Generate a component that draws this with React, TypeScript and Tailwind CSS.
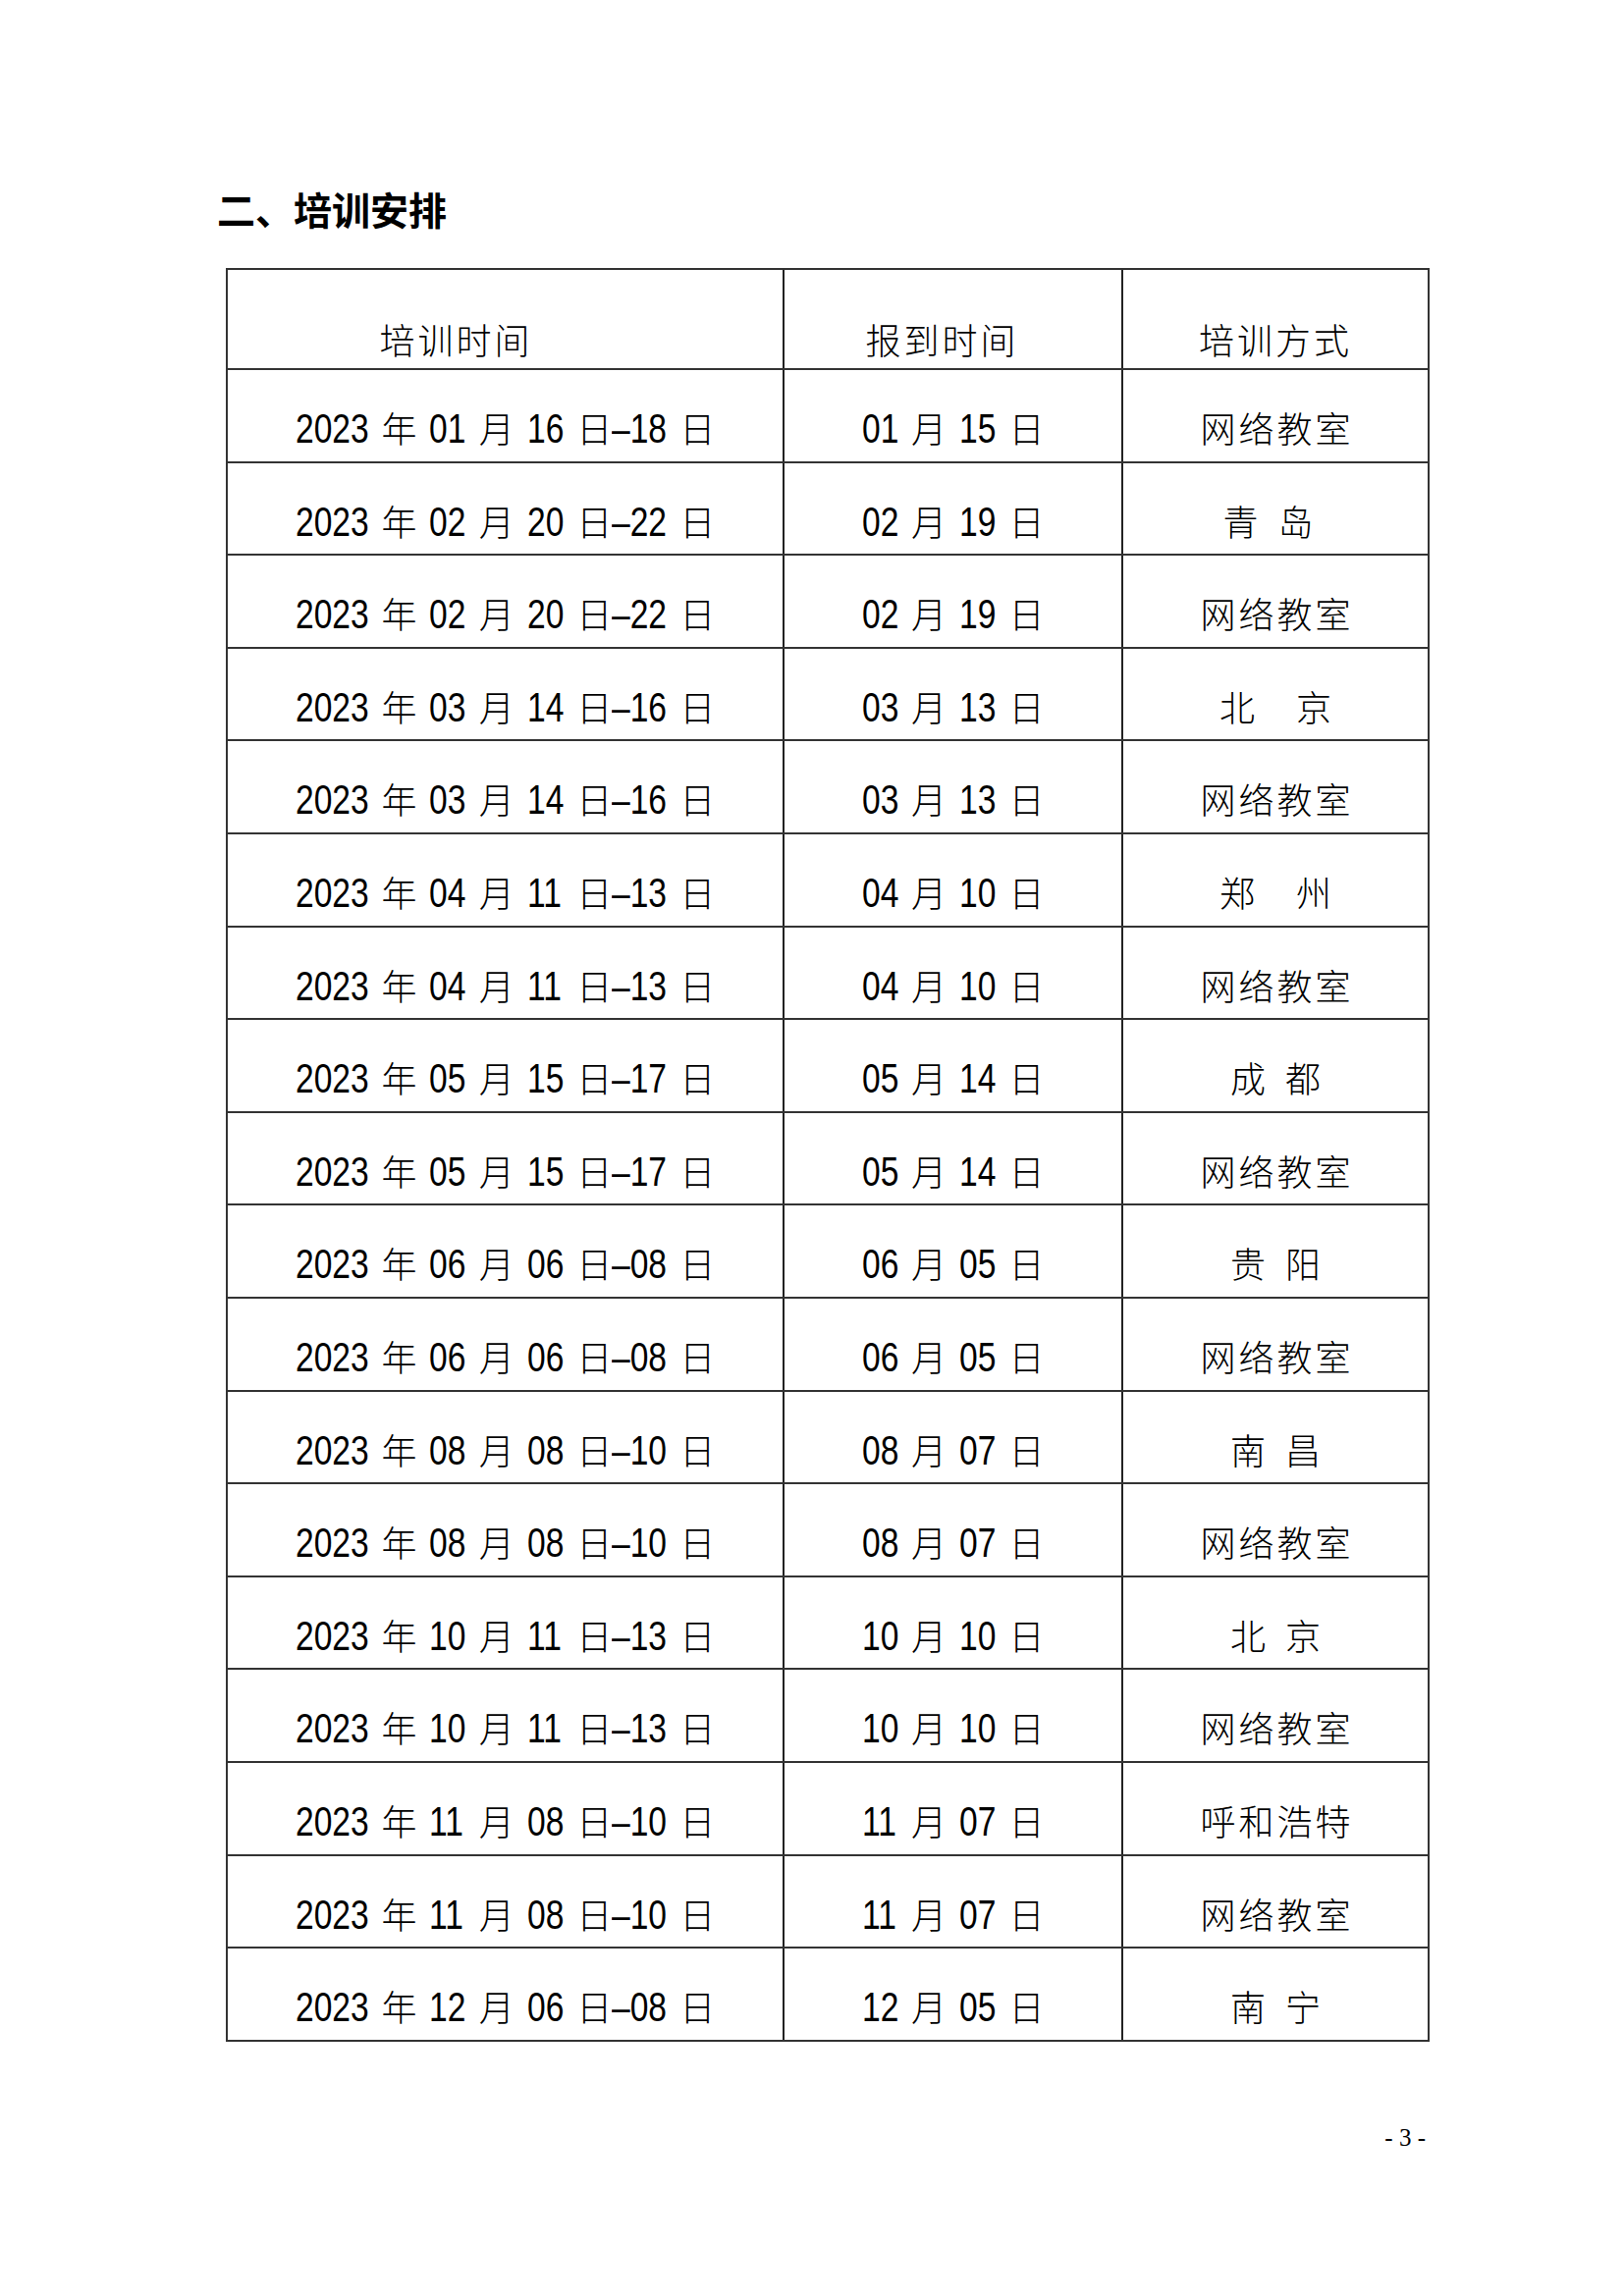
import React from 'react';

type Place = { name: string; gap: 'tight' | 'narrow' | 'wide'; shift?: boolean };

const rows: [string, string, Place][] = [
  ['2023 年 01 月 16 日–18 日', '01 月 15 日', { name: '网络教室', gap: 'tight' }],
  ['2023 年 02 月 20 日–22 日', '02 月 19 日', { name: '青岛', gap: 'narrow', shift: true }],
  ['2023 年 02 月 20 日–22 日', '02 月 19 日', { name: '网络教室', gap: 'tight' }],
  ['2023 年 03 月 14 日–16 日', '03 月 13 日', { name: '北京', gap: 'wide' }],
  ['2023 年 03 月 14 日–16 日', '03 月 13 日', { name: '网络教室', gap: 'tight' }],
  ['2023 年 04 月 11 日–13 日', '04 月 10 日', { name: '郑州', gap: 'wide' }],
  ['2023 年 04 月 11 日–13 日', '04 月 10 日', { name: '网络教室', gap: 'tight' }],
  ['2023 年 05 月 15 日–17 日', '05 月 14 日', { name: '成都', gap: 'narrow' }],
  ['2023 年 05 月 15 日–17 日', '05 月 14 日', { name: '网络教室', gap: 'tight' }],
  ['2023 年 06 月 06 日–08 日', '06 月 05 日', { name: '贵阳', gap: 'narrow' }],
  ['2023 年 06 月 06 日–08 日', '06 月 05 日', { name: '网络教室', gap: 'tight' }],
  ['2023 年 08 月 08 日–10 日', '08 月 07 日', { name: '南昌', gap: 'narrow' }],
  ['2023 年 08 月 08 日–10 日', '08 月 07 日', { name: '网络教室', gap: 'tight' }],
  ['2023 年 10 月 11 日–13 日', '10 月 10 日', { name: '北京', gap: 'narrow' }],
  ['2023 年 10 月 11 日–13 日', '10 月 10 日', { name: '网络教室', gap: 'tight' }],
  ['2023 年 11 月 08 日–10 日', '11 月 07 日', { name: '呼和浩特', gap: 'tight' }],
  ['2023 年 11 月 08 日–10 日', '11 月 07 日', { name: '网络教室', gap: 'tight' }],
  ['2023 年 12 月 06 日–08 日', '12 月 05 日', { name: '南宁', gap: 'narrow' }],
];

const gapClass = {
  tight: 'gap-[3px]',
  narrow: 'gap-[20px]',
  wide: 'gap-[42px]',
};

// Liberation Sans digits squeezed to ~80% width, the document uses a condensed face
const DIGIT_W = 18.7;

function Narrow({ text }: { text: string }) {
  return (
    <span className="inline-block overflow-visible" style={{ width: text.length * DIGIT_W }}>
      <span className="inline-block origin-left scale-x-[0.8]">{text}</span>
    </span>
  );
}

// digits and spaces in the sans face, han characters in the CJK face
function DateText({ text }: { text: string }) {
  const parts = text.match(/[0-9–]+|\s+|[^0-9–\s]+/g) ?? [];
  return (
    <div className="whitespace-pre leading-[42px] text-[42px] font-['Liberation_Sans',sans-serif]">
      {parts.map((p, i) =>
        /[0-9–]/.test(p) ? (
          <Narrow key={i} text={p} />
        ) : /\s/.test(p) ? (
          <span key={i} className="inline-block w-[13px]"> </span>
        ) : (
          <span key={i} className="text-[36px] font-light font-['Noto_Sans_CJK_SC',sans-serif]">
            {p}
          </span>
        )
      )}
    </div>
  );
}

export default function App() {
  return (
    <div className="w-[1654px] h-[2339px] bg-white text-black font-['Noto_Sans_CJK_SC',sans-serif]">
      {/* section heading */}
      <div className="pt-[193px] pl-[221px] text-[39px] leading-none font-bold">二、培训安排</div>

      {/* schedule table */}
      <div className="mt-[41px] ml-[230px] w-[1226px] border-2 border-[#333]">
        <div className="grid grid-cols-[565px_345px_312px] h-[100px] text-[36px] leading-[42px] tracking-[3px] font-light">
          <div className="flex justify-center pt-[49px] pr-[100px]">培训时间</div>
          <div className="flex justify-center pt-[49px] pr-[22px] border-l-2 border-[#222]">报到时间</div>
          <div className="flex justify-center pt-[49px] border-l-2 border-[#222]">培训方式</div>
        </div>

        {rows.map(([train, report, place], i) => (
          <div key={i} className="grid grid-cols-[565px_345px_312px] h-[94.6px] border-t-2 border-[#333]">
            <div className="flex justify-center pt-[37px]">
              <DateText text={train} />
            </div>
            <div className="flex justify-center pt-[37px] border-l-2 border-[#222]">
              <DateText text={report} />
            </div>
            <div
              className={`flex justify-center pt-[37px] border-l-2 border-[#222] text-[36px] leading-[42px] font-light ${gapClass[place.gap]} ${place.shift ? 'pr-[15px]' : ''}`}
            >
              {place.name.split('').map((c, j) => (
                <span key={j}>{c}</span>
              ))}
            </div>
          </div>
        ))}
      </div>

      {/* page number */}
      <div className="mt-[85px] pr-[202px] text-right text-[25px] leading-none font-['Liberation_Serif',serif]">
        - 3 -
      </div>
    </div>
  );
}
